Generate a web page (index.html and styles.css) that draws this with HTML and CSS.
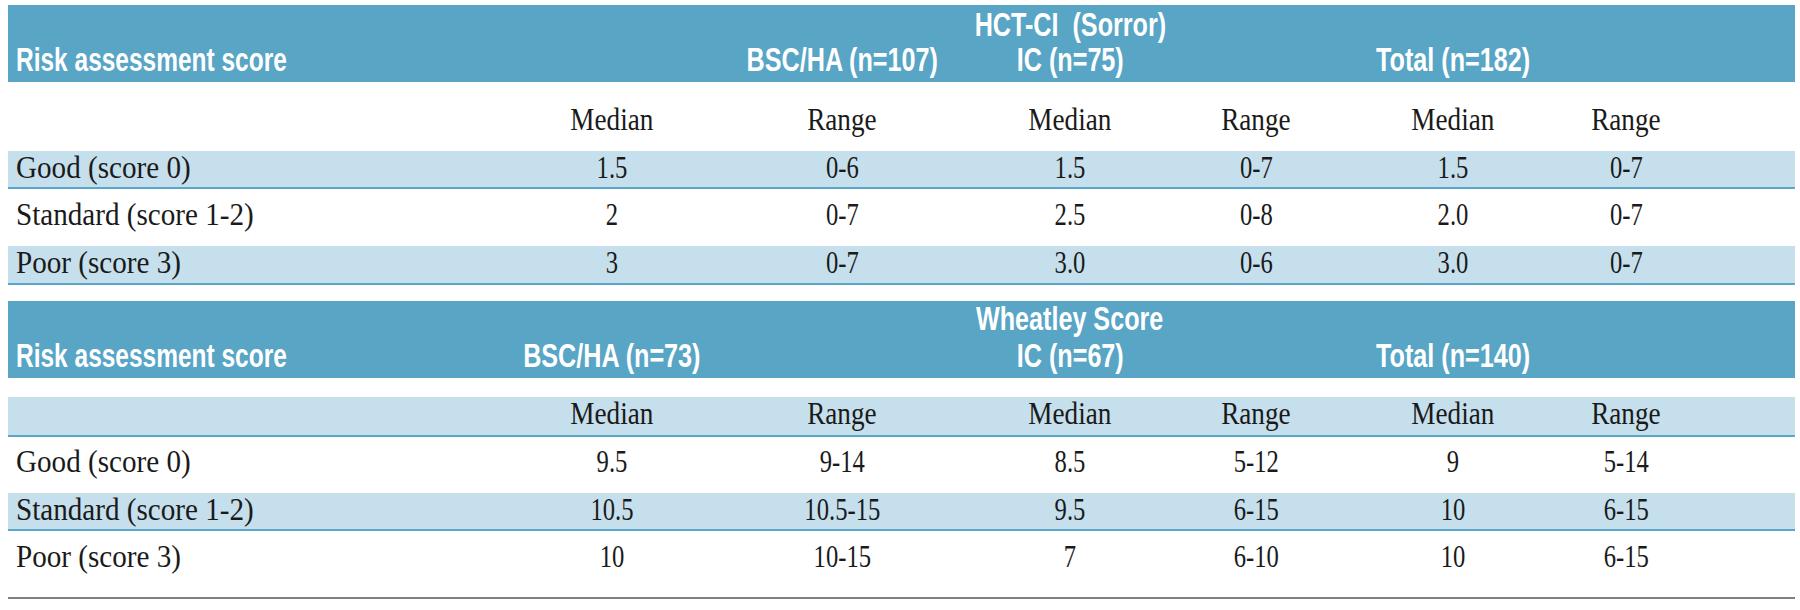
FILE: index.html
```html
<!DOCTYPE html>
<html lang="en">
<head>
<meta charset="utf-8">
<title>Risk assessment scores</title>
<link rel="stylesheet" href="styles.css">
</head>
<body>
<div class="page">
  <section class="tbl">
    <div class="hdr">
      <div class="grid line1">
        <div class="cell lab"></div><div class="cell"></div><div class="cell"></div>
        <div class="cell"><span class="t th">HCT-CI&nbsp; (Sorror)</span></div>
      </div>
      <div class="grid line2">
        <div class="cell lab"><span class="t th tl">Risk assessment score</span></div>
        <div class="cell"></div>
        <div class="cell"><span class="t th">BSC/HA (n=107)</span></div>
        <div class="cell"><span class="t th">IC (n=75)</span></div>
        <div class="cell"></div>
        <div class="cell"><span class="t th">Total (n=182)</span></div>
      </div>
    </div>
    <div class="grid row r-sub1">
      <div class="cell lab"></div>
      <div class="cell"><span class="t ts">Median</span></div>
      <div class="cell"><span class="t ts">Range</span></div>
      <div class="cell"><span class="t ts">Median</span></div>
      <div class="cell"><span class="t ts">Range</span></div>
      <div class="cell"><span class="t ts">Median</span></div>
      <div class="cell"><span class="t ts">Range</span></div>
    </div>
    <div class="grid row band bl r-tight">
      <div class="cell lab"><span class="t tlab">Good (score 0)</span></div>
      <div class="cell"><span class="t td">1.5</span></div>
      <div class="cell"><span class="t td">0-6</span></div>
      <div class="cell"><span class="t td">1.5</span></div>
      <div class="cell"><span class="t td">0-7</span></div>
      <div class="cell"><span class="t td">1.5</span></div>
      <div class="cell"><span class="t td">0-7</span></div>
    </div>
    <div class="grid row r-std1">
      <div class="cell lab"><span class="t tlab">Standard (score 1-2)</span></div>
      <div class="cell"><span class="t td">2</span></div>
      <div class="cell"><span class="t td">0-7</span></div>
      <div class="cell"><span class="t td">2.5</span></div>
      <div class="cell"><span class="t td">0-8</span></div>
      <div class="cell"><span class="t td">2.0</span></div>
      <div class="cell"><span class="t td">0-7</span></div>
    </div>
    <div class="grid row band bl r-poor1">
      <div class="cell lab"><span class="t tlab">Poor (score 3)</span></div>
      <div class="cell"><span class="t td">3</span></div>
      <div class="cell"><span class="t td">0-7</span></div>
      <div class="cell"><span class="t td">3.0</span></div>
      <div class="cell"><span class="t td">0-6</span></div>
      <div class="cell"><span class="t td">3.0</span></div>
      <div class="cell"><span class="t td">0-7</span></div>
    </div>
  </section>

  <section class="tbl tbl-b">
    <div class="hdr hdr-b">
      <div class="grid line1">
        <div class="cell lab"></div><div class="cell"></div><div class="cell"></div>
        <div class="cell"><span class="t th">Wheatley Score</span></div>
      </div>
      <div class="grid line2">
        <div class="cell lab"><span class="t th tl">Risk assessment score</span></div>
        <div class="cell"><span class="t th">BSC/HA (n=73)</span></div>
        <div class="cell"></div>
        <div class="cell"><span class="t th">IC (n=67)</span></div>
        <div class="cell"></div>
        <div class="cell"><span class="t th">Total (n=140)</span></div>
      </div>
    </div>
    <div class="gap19"></div>
    <div class="grid row band bl r-sub2">
      <div class="cell lab"></div>
      <div class="cell"><span class="t ts">Median</span></div>
      <div class="cell"><span class="t ts">Range</span></div>
      <div class="cell"><span class="t ts">Median</span></div>
      <div class="cell"><span class="t ts">Range</span></div>
      <div class="cell"><span class="t ts">Median</span></div>
      <div class="cell"><span class="t ts">Range</span></div>
    </div>
    <div class="grid row r-good2">
      <div class="cell lab"><span class="t tlab">Good (score 0)</span></div>
      <div class="cell"><span class="t td">9.5</span></div>
      <div class="cell"><span class="t td">9-14</span></div>
      <div class="cell"><span class="t td">8.5</span></div>
      <div class="cell"><span class="t td">5-12</span></div>
      <div class="cell"><span class="t td">9</span></div>
      <div class="cell"><span class="t td">5-14</span></div>
    </div>
    <div class="grid row band bl r-tight">
      <div class="cell lab"><span class="t tlab">Standard (score 1-2)</span></div>
      <div class="cell"><span class="t td">10.5</span></div>
      <div class="cell"><span class="t td">10.5-15</span></div>
      <div class="cell"><span class="t td">9.5</span></div>
      <div class="cell"><span class="t td">6-15</span></div>
      <div class="cell"><span class="t td">10</span></div>
      <div class="cell"><span class="t td">6-15</span></div>
    </div>
    <div class="grid row r-poor2">
      <div class="cell lab"><span class="t tlab">Poor (score 3)</span></div>
      <div class="cell"><span class="t td">10</span></div>
      <div class="cell"><span class="t td">10-15</span></div>
      <div class="cell"><span class="t td">7</span></div>
      <div class="cell"><span class="t td">6-10</span></div>
      <div class="cell"><span class="t td">10</span></div>
      <div class="cell"><span class="t td">6-15</span></div>
    </div>
  </section>
</div>
</body>
</html>
```
FILE: styles.css
```css
* { box-sizing: border-box; }

body {
  margin: 0;
  background: #ffffff;
}

.page {
  padding: 5px 5px 0 8px;
  font-family: "Liberation Serif", "Times New Roman", serif;
  color: #1a1a1a;
}

.tbl-b {
  margin-top: 16px;
}

.grid {
  display: grid;
  grid-template-columns: 489px 230px 230px 226px 146px 248px 98px 1fr;
}

.cell {
  display: flex;
  justify-content: center;
  align-items: flex-start;
  white-space: nowrap;
  min-width: 0;
}

.cell.lab {
  justify-content: flex-start;
  padding-left: 8px;
}

.t {
  display: inline-block;
  flex: none;
  transform-origin: center top;
}

.th { transform: scaleX(0.74); }
.th.tl { transform: scaleX(0.72); transform-origin: left top; }
.ts { transform: scaleX(0.85); }
.td { transform: scaleX(0.77); }
.tlab { transform: scaleX(0.91); transform-origin: left top; }

/* header band */
.hdr {
  background: #58a5c6;
  color: #ffffff;
  font-family: "Liberation Sans", Arial, sans-serif;
  font-weight: 700;
  font-size: 34px;
  line-height: 35px;
  height: 77px;
  padding-top: 2px;
}

.hdr .line1 { height: 35px; }
.hdr .line2 { height: 35px; }

.hdr-b { padding-top: 0; }
.hdr-b .line1 { height: 37px; }

/* body rows */
.row {
  font-size: 32px;
  line-height: 32px;
}

.band { background: #c6dfec; }
.bl { border-bottom: 2px solid #5aa7ca; }

.r-sub1 { height: 69px; padding-top: 21px; }
.r-tight { height: 38px; padding-top: 0; }
.r-std1 { height: 57px; padding-top: 9px; }
.r-poor1 { height: 39px; padding-top: 0; }

.gap19 { height: 19px; }
.r-sub2 { height: 40px; padding-top: 0; }
.r-good2 { height: 56px; padding-top: 8px; }
.r-poor2 {
  height: 68px;
  padding-top: 9px;
  border-bottom: 2px solid #808080;
}
```
